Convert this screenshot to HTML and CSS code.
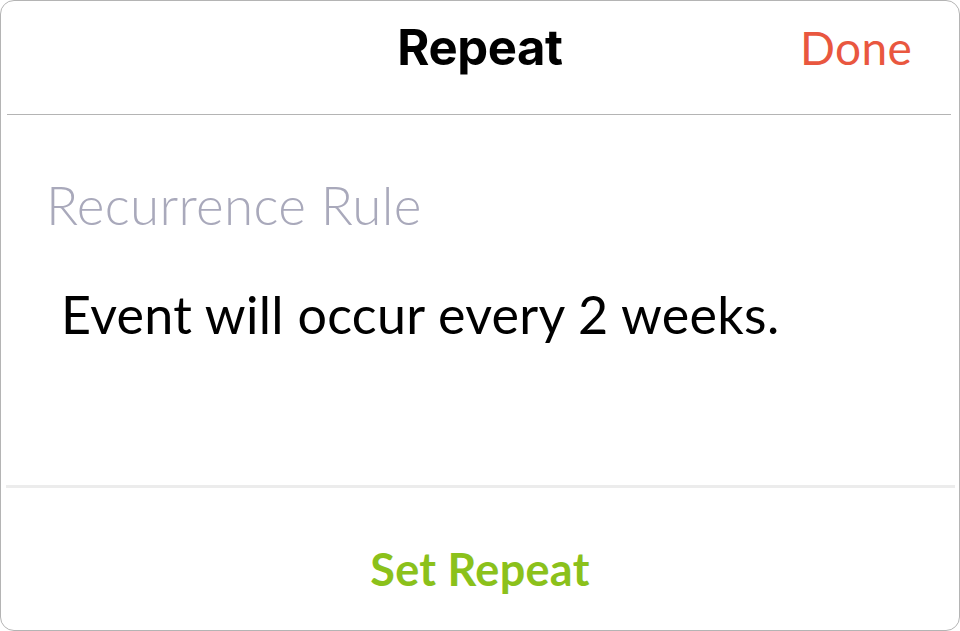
FILE: index.html
```html
<!DOCTYPE html>
<html lang="en">
<head>
    <meta charset="UTF-8">
    <title>Repeat</title>
    <link rel="stylesheet" href="styles.css">
</head>
<body>

<div class="sheet">
    <header class="sheet-header">
        <span></span>
        <h1 class="title">Repeat</h1>
        <button class="done">Done</button>
    </header>
    <div class="rule top-rule"></div>

    <section class="content">
        <div class="label">Recurrence Rule</div>
        <p class="summary">Event will occur every 2 weeks.</p>
    </section>

    <div class="rule bottom-rule"></div>
    <footer class="sheet-footer">
        <button class="set-repeat">Set Repeat</button>
    </footer>
</div>

</body>
</html>
```

FILE: styles.css
```css
html, body {
    margin: 0;
    padding: 0;
    background-color: #ffffff;
}
body {
    font-family: Lato, "Open Sans", sans-serif;
    color: #000;
}
.sheet {
    box-sizing: border-box;
    width: 960px;
    height: 631px;
    border: 1.5px solid #b4b4b4;
    border-radius: 14px;
    display: flex;
    flex-direction: column;
    overflow: hidden;
}
.sheet-header {
    box-sizing: border-box;
    height: 113px;
    display: grid;
    grid-template-columns: 1fr auto 1fr;
    align-items: center;
    padding: 0 47px 20px 47px;
}
.title {
    margin: 0;
    font-family: Inter, sans-serif;
    font-weight: 700;
    font-size: 49px;
    letter-spacing: -0.4px;
}
.done {
    justify-self: end;
    background: none;
    border: none;
    padding: 0;
    font-family: Lato, sans-serif;
    font-size: 46px;
    letter-spacing: 0.3px;
    color: #e9573f;
    cursor: pointer;
}
.rule {
    flex: none;
}
.top-rule {
    height: 1px;
    margin: 0 8px 0 6px;
    background-color: #b4b4b4;
}
.bottom-rule {
    height: 3px;
    margin: 0 4px 0 5px;
    background-color: #ececec;
}
.content {
    flex: 1;
    padding: 58px 0 0 0;
}
.label {
    padding-left: 45px;
    font-size: 53px;
    font-weight: 300;
    letter-spacing: 0.3px;
    color: #a9a9bb;
}
.summary {
    margin: 47px 0 0 0;
    padding-left: 60px;
    font-size: 52px;
    letter-spacing: 0.3px;
    color: #000;
}
.sheet-footer {
    box-sizing: border-box;
    height: 142px;
    padding-top: 20px;
    display: flex;
    justify-content: center;
    align-items: center;
}
.set-repeat {
    background: none;
    border: none;
    padding: 0;
    font-family: Lato, sans-serif;
    font-weight: 700;
    font-size: 45px;
    letter-spacing: 0.3px;
    color: #8bc11b;
    cursor: pointer;
}
```
